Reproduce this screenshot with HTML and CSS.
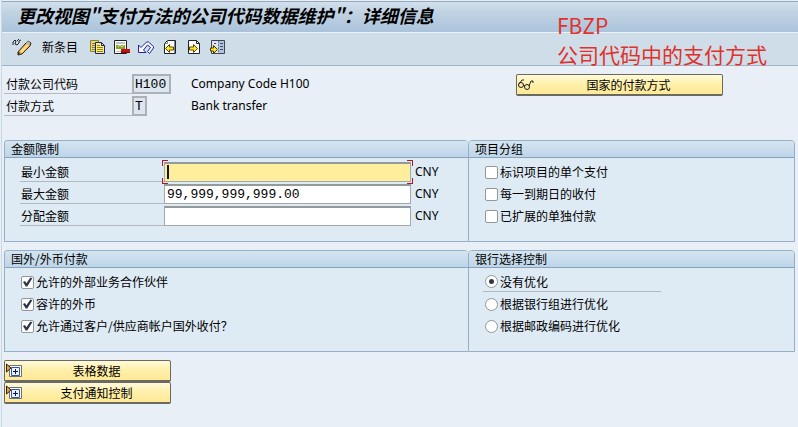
FILE: index.html
```html
<!DOCTYPE html>
<html lang="zh-CN">
<head>
<meta charset="utf-8">
<title>更改视图"支付方法的公司代码数据维护"：详细信息</title>
<link rel="stylesheet" href="styles.css">
</head>
<body>
<div class="window">
  <header class="titlebar"><h1>更改视图"支付方法的公司代码数据维护"：详细信息</h1></header>
  <nav class="toolbar">
    <button class="tool" aria-label="显示/更改">
      <svg width="20" height="18" viewBox="0 0 20 18"><path d="M1 7V4l2-2 1 1-1 3 2 1 2-2V3l2-1M5 3l2-2" fill="none" stroke="#222"/><path d="M6 14l7-8 3-3 3 2-1 3-8 8-4 1z" fill="#e9a43c" stroke="#332a20"/><path d="M8 13l7-7 2 1-7 8z" fill="#ffe08a"/><path d="M14 5l2-2 2 2-2 2z" fill="#a9bdd2"/><path d="M6 14l2 1-2 2z" fill="#222"/></svg>
    </button>
    <button class="tool text">新条目</button>
    <button class="tool" aria-label="复制">
      <svg width="16" height="16" viewBox="0 0 16 16"><path d="M.5 1.500h8v11h-8z" fill="#e8dc68" stroke="#8a8030"/><path d="M2 4.500h5M2 6.500h4M2 8.500h4M2 10.500h4" stroke="#8a8030"/><path d="M5.500 3.500h6l3 3v8h-9z" fill="#fff06a" stroke="#1c1c8c"/><path d="M11.500 3.500v3h3" fill="none" stroke="#1c1c8c"/><path d="M7 6.500h3M7 8.500h6M7 10.500h6M7 12.500h6" stroke="#8a8030"/></svg>
    </button>
    <button class="tool" aria-label="删除">
      <svg width="16" height="16" viewBox="0 0 16 16"><path d="M.5 1.500h12v13H.5z" fill="#fff" stroke="#222"/><path d="M2 3h9v2H2z" fill="#b9c4d0"/><path d="M2 6h9v4H2z" fill="#87a52b"/><path d="M4 8l2-2 2 2 2-2" fill="none" stroke="#d9e59a"/><path d="M2 12h6v1H2z" fill="#b9c4d0"/><path d="M7 10h9v4H7z" fill="#c80f0f"/><path d="M7 13h9v1H7z" fill="#7c0808"/></svg>
    </button>
    <button class="tool" aria-label="撤消">
      <svg width="16" height="16" viewBox="0 0 16 16"><path d="M.5 6v7.500H8L5.500 11 9.500 6l3 2.500-3 4 2 2L15.500 9V7.500l-5-4.500H8.500L3 8.500z" fill="#f5f8ff" stroke="#24249a"/></svg>
    </button>
    <button class="tool" aria-label="上一条目">
      <svg width="16" height="16" viewBox="0 0 16 16"><path d="M5.500 1.500h8v13h-11v-10z" fill="#fff" stroke="#222"/><path d="M2.500 4.500h3v-3M12.500 2v12" fill="none" stroke="#7b8794"/><path d="M3.500 9.500l4-4v2.500h4v3h-4v2.500z" fill="#ffe52a" stroke="#5c4a00"/></svg>
    </button>
    <button class="tool" aria-label="下一条目">
      <svg width="16" height="16" viewBox="0 0 16 16"><path d="M2.500 1.500h8l3 3v10h-11z" fill="#fff" stroke="#222"/><path d="M10.500 1.500v3h3" fill="none" stroke="#222"/><path d="M11.500 9.500l-4-4v2.500h-4v3h4v2.500z" fill="#ffe52a" stroke="#5c4a00"/></svg>
    </button>
    <button class="tool" aria-label="其它条目">
      <svg width="16" height="16" viewBox="0 0 16 16"><path d="M1.500 1.500h13v13h-13z" fill="#b4c4d8" stroke="#3c4454"/><path d="M2 2h6v12H2z" fill="#dde6ef"/><path d="M8.500 2v12" stroke="#6c7a8c" stroke-dasharray="2 1"/><path d="M10 4.500h3M10 7.500h3M10 10.500h3M4 4.500h2" stroke="#3c4a78"/><path d="M7.500 10.500l-4-4v2.500h-3v3h3v2.500z" fill="#ffe52a" stroke="#4a3c00"/></svg>
    </button>
  </nav>

  <main>
    <section class="keys">
      <div class="key-fields">
        <div class="row">
          <label class="name" for="company">付款公司代码</label>
          <input class="field locked code" id="company" value="H100" readonly>
          <span class="latin note">Company Code H100</span>
        </div>
        <div class="row">
          <label class="name" for="method">付款方式</label>
          <input class="field locked letter" id="method" value="T" readonly>
          <span class="latin note">Bank transfer</span>
        </div>
      </div>
      <button class="push wide">
        <svg class="push-icon" width="18" height="14" viewBox="0 0 18 14"><g fill="none" stroke="#222"><circle cx="4" cy="7" r="2.500"/><circle cx="10" cy="9" r="2.500"/><path d="M2 6l3-4h2M6 7l2 1M12 8l2-5h2v2"/></g></svg>
        <span>国家的付款方式</span>
      </button>
    </section>

    <div class="groups">
      <section class="group">
        <h2>金额限制</h2>
        <div class="body">
          <div class="row">
            <label class="name" for="min">最小金额</label>
            <span class="focus"><input class="field amount" id="min"></span>
            <span class="latin">CNY</span>
          </div>
          <div class="row">
            <label class="name" for="max">最大金额</label>
            <input class="field amount" id="max" value="99,999,999,999.00">
            <span class="latin">CNY</span>
          </div>
          <div class="row">
            <label class="name" for="share">分配金额</label>
            <input class="field amount" id="share">
            <span class="latin">CNY</span>
          </div>
        </div>
      </section>
      <section class="group">
        <h2>项目分组</h2>
        <div class="body">
          <label class="option"><input type="checkbox">标识项目的单个支付</label>
          <label class="option"><input type="checkbox">每一到期日的收付</label>
          <label class="option"><input type="checkbox">已扩展的单独付款</label>
        </div>
      </section>
    </div>

    <div class="groups">
      <section class="group">
        <h2>国外/外币付款</h2>
        <div class="body">
          <label class="option"><input type="checkbox" checked>允许的外部业务合作伙伴</label>
          <label class="option"><input type="checkbox" checked>容许的外币</label>
          <label class="option"><input type="checkbox" checked>允许通过客户/供应商帐户国外收付？</label>
        </div>
      </section>
      <section class="group">
        <h2>银行选择控制</h2>
        <div class="body">
          <label class="option lined"><input type="radio" name="bank" checked>没有优化</label>
          <label class="option"><input type="radio" name="bank">根据银行组进行优化</label>
          <label class="option"><input type="radio" name="bank">根据邮政编码进行优化</label>
        </div>
      </section>
    </div>

    <div class="actions">
      <button class="push">
        <svg class="push-icon" width="18" height="16" viewBox="0 0 18 16"><path d="M4.500 2.500h12v11h-12z" fill="#fff" stroke="#667080"/><path d="M6.500 4.500h8v8h-8z" fill="#eaf1fb" stroke="#31569a"/><path d="M8 8.500h5M10.500 6v5" stroke="#10106c"/><path d="M1.500 1v8L6 5z" fill="#f0a030" stroke="#222"/></svg>
        <span>表格数据</span>
      </button>
      <button class="push">
        <svg class="push-icon" width="18" height="16" viewBox="0 0 18 16"><path d="M4.500 2.500h12v11h-12z" fill="#fff" stroke="#667080"/><path d="M6.500 4.500h8v8h-8z" fill="#eaf1fb" stroke="#31569a"/><path d="M8 8.500h5M10.500 6v5" stroke="#10106c"/><path d="M1.500 1v8L6 5z" fill="#f0a030" stroke="#222"/></svg>
        <span>支付通知控制</span>
      </button>
    </div>
  </main>
  <p class="annotation">FBZP<br>公司代码中的支付方式</p>
</div>
</body>
</html>
```
FILE: styles.css
```css
* {
  box-sizing: border-box;
}

body {
  margin: 0;
  background: #e8eff6;
  color: #000;
  font: 12px/20px "Noto Sans CJK SC", sans-serif;
}

button,
input {
  margin: 0;
  padding: 0;
  border: 0;
  background: none;
  color: inherit;
  font: inherit;
}

.window {
  position: relative;
  min-height: 100vh;
  margin-left: 1px;
  padding-top: 1px;
  border-left: 1px solid #cbd7e2;
}

.titlebar {
  height: 32px;
  padding-left: 15px;
  border-top: 1px solid #96a9bc;
  border-bottom: 1px solid #eaf2f9;
  background: linear-gradient(#d2e0ed, #c3d4e3 30%, #aac3dc);
}

h1 {
  margin: 0;
  font-size: 18px;
  font-style: italic;
  font-weight: 700;
  line-height: 26px;
}

.toolbar {
  display: flex;
  align-items: center;
  gap: 8px;
  height: 33px;
  padding: 0 10px 4px;
  border-bottom: 1px solid #9db4c8;
  background: #cfdde8;
}

.tool {
  display: block;
}

.tool.text {
  margin: 0 4px 0 2px;
}

.tool svg,
.push svg {
  display: block;
}

main {
  padding: 8px 3px 0 2px;
}

.keys {
  display: flex;
  justify-content: space-between;
  align-items: flex-start;
  padding-right: 72px;
  margin-bottom: 22px;
}

.row {
  display: flex;
  height: 20px;
  margin-bottom: 2px;
}

.name {
  flex: none;
  width: 144px;
  padding-left: 1px;
  border-bottom: 1px solid #b3b9be;
}

.keys .name {
  width: 128px;
  padding-left: 2px;
}

.field {
  display: block;
  height: 20px;
  padding: 0 2px;
  border: 1px solid #a2a8ab;
  border-top: 2px solid #94999a;
  background: #fff;
  font: 13px/17px "Liberation Mono", monospace;
}

.locked {
  padding: 0 1px;
  border: 2px solid #abb1b6;
  background: #dbe6ef;
}

.code {
  width: 39px;
  margin-right: 20px;
}

.letter {
  width: 15px;
  margin-right: 44px;
}

.amount {
  width: 247px;
}

.latin {
  font-family: "Noto Sans", sans-serif;
  padding-left: 4px;
}

.note {
  padding-left: 0;
}

.focus {
  position: relative;
}

.focus .field {
  background: linear-gradient(#101828, #101828) 2px 1px / 2px 14px no-repeat #ffee9c;
}

/* Corner marks round the field that has the cursor */
.focus::after {
  content: "";
  position: absolute;
  inset: -2px;
  --mark: linear-gradient(#b01824, #b01824);
  background:
    var(--mark) left top / 6px 1px, var(--mark) left top / 1px 6px,
    var(--mark) right top / 6px 1px, var(--mark) right top / 1px 6px,
    var(--mark) left bottom / 6px 1px, var(--mark) left bottom / 1px 6px,
    var(--mark) right bottom / 6px 1px, var(--mark) right bottom / 1px 6px;
  background-repeat: no-repeat;
  pointer-events: none;
}

.groups {
  display: grid;
  grid-template-columns: 464fr 327fr;
  margin-bottom: 8px;
}

.group {
  border: 1px solid #95afc7;
  border-radius: 4px 4px 0 0;
  background: #deeaf4;
}

.group:first-child {
  border-right: 0;
}

h2 {
  margin: 0;
  padding-left: 6px;
  border-bottom: 1px solid #86a4c0;
  border-radius: 3px 3px 0 0;
  background: linear-gradient(#d5e4f0, #bed5e8);
  font-size: 12px;
  font-weight: 400;
  line-height: 16px;
}

.body {
  padding: 4px 15px 13px;
}

.option {
  display: flex;
  align-items: center;
  gap: 2px;
  width: 178px;
  height: 20px;
  margin-bottom: 2px;
  white-space: nowrap;
}

.group:first-child .option {
  padding-left: 1px;
}

.group + .group .body {
  padding-left: 14px;
}

.group + .group .option {
  padding-left: 2px;
}

.lined {
  border-bottom: 1px solid #b3b9be;
}

input[type="checkbox"],
input[type="radio"] {
  appearance: none;
  flex: none;
  width: 13px;
  height: 13px;
  border: 1px solid #92979c;
  border-radius: 2px;
  background: #fff;
}

input[type="radio"] {
  border-radius: 50%;
}

input[type="checkbox"]:checked::before {
  content: "";
  display: block;
  width: 11px;
  height: 11px;
  background: #30374a;
  clip-path: polygon(9% 50%, 27% 42%, 40% 62%, 76% 9%, 94% 16%, 48% 91%, 34% 91%);
}

input[type="radio"]:checked::before {
  content: "";
  display: block;
  width: 5px;
  height: 5px;
  margin: 3px;
  border-radius: 50%;
  background: #30374a;
}

.push {
  display: grid;
  grid-template-columns: 1fr;
  align-items: center;
  width: 167px;
  height: 22px;
  border: 1px solid #6c6a5e;
  border-bottom-width: 2px;
  border-radius: 2px;
  background: linear-gradient(#fffadb, #fff0ac 45%, #ffe996);
  line-height: 18px;
}

.push > * {
  grid-area: 1 / 1;
}

.push span {
  padding-left: 18px;
}

.wide {
  width: 207px;
}

.annotation {
  position: absolute;
  top: 11px;
  left: 555px;
  margin: 0;
  color: #e0322b;
  font-size: 21px;
  line-height: 29px;
  white-space: nowrap;
}
```
